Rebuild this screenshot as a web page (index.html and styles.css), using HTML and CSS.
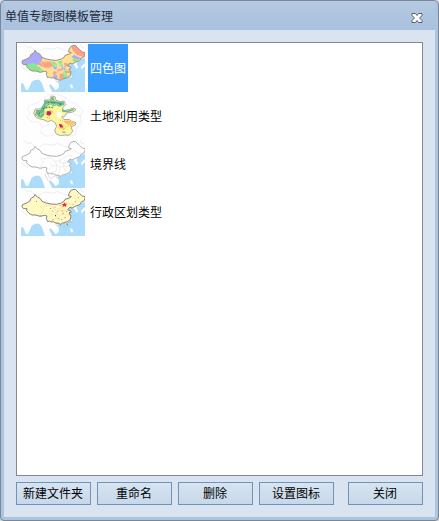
FILE: index.html
```
<!DOCTYPE html>
<html lang="zh-CN">
<head>
<meta charset="utf-8">
<title>单值专题图模板管理</title>
<link rel="stylesheet" href="styles.css">
</head>
<body>
<svg class="defs" aria-hidden="true">
  <defs>
    <path id="china" d="M24 68 25 62 38 57 48 51 50 44 60 38 63 31 70 39 78 43 84 52 96 57 112 60 128 61 142 57 150 52 153 46 166 42 172 38 164 36 165 28 172 18 184 16 196 28 205 36 214 38 211 50 203 53 197 62 186 66 174 72 168 69 161 77 168 80 172 83 165 87 171 96 169 106 160 113 146 117 140 121 132 117 126 118 118 113 111 114 106 111 101 113 97 103 99 96 92 94 78 97 66 93 54 93 45 88 38 80 39 74 28 74Z"/>
    <clipPath id="chinaClip"><use href="#china"/></clipPath>
    <g id="base">
      <rect x="21" y="12" width="192" height="144" fill="#fefefe"/>
      <path fill="none" stroke="#e4e4e4" stroke-width="2" d="M30 13 38 22 52 20 60 30M72 40 82 30 94 24 118 28 130 22 150 30 164 34M198 12 202 22 213 24M22 78 32 90 42 94"/>
      <path fill="#abdcfb" d="M213 54 202 56 190 67 187 72 193 82 187 86 181 74 174 71 167 70 162 77 171 82 167 88 172 98 168 108 157 115 144 118 133 119 126 122 135 132 134 144 125 151 118 142 109 133 105 137 111 148 114 156 213 156ZM21 129 29 132 35 149 43 149 53 125 64 119 75 119 82 126 87 139 93 156 21 156Z"/>
      <path fill="#fff" stroke="#ddd" d="M203 78 213 69 213 78 205 86 200 85ZM171 107 174 104 173 113 170 114ZM168 134 174 133 178 145 171 145Z"/>
      <path fill="#fff" stroke="#ccc" stroke-width="1.5" d="M125 121 132 119 133 123 128 125Z"/>
      <path fill="none" stroke="#79c4ef" stroke-width="2" stroke-dasharray="3 7" d="M181 94 170 122 158 132 151 150 138 154"/>
    </g>
    <path id="provinces" fill="none" stroke-width="1.5" d="M78 65 88 77 78 97M88 68 109 63 119 75 137 75 151 65 162 57 176 61M106 80 115 91 129 88 138 94 151 90 163 92M123 75 129 88 127 104 111 110M138 94 136 110M151 73 148 90 156 111M138 70 137 80 149 82 167 78M114 91 104 101M180 43 193 51 202 53"/>
  </defs>
</svg>
<main class="window">
  <header class="titlebar">
    <h1>单值专题图模板管理</h1>
    <svg class="close" viewBox="0 0 12 10" role="img" aria-label="关闭">
      <path d="M1 .5H4.5L6 2.5 7.5.5H11V2.5L8.5 5 11 7.5V9.5H7.5L6 7.5 4.5 9.5H1V7.5L3.5 5 1 2.5Z"/>
    </svg>
  </header>
  <section class="content">
    <ul class="list">
      <li class="item selected">
        <svg class="thumb" viewBox="21 12 192 144">
          <use href="#base"/>
          <g clip-path="url(#chinaClip)">
            <rect x="21" y="12" width="192" height="144" fill="#ffe28f"/>
            <path fill="#aaa9fb" d="M20 30H76L86 55 78 74H20ZM115 74H126L131 86 121 90ZM181 44 204 55 190 60 172 51ZM143 79H154V91H143ZM118 103 131 107 128 119H115Z"/>
            <path fill="#8ae691" d="M35 72 60 70 80 84 91 94 78 101 48 97ZM108 64 122 66 132 76 122 81 106 75ZM133 65 143 61 146 78 137 82ZM151 87 162 90 158 101 147 98ZM145 103 157 100 162 114 145 118ZM180 53 192 58 186 67 174 62Z"/>
            <path fill="#ff9f87" d="M76 66 108 63 116 78 105 84 86 82 74 74ZM172 18 188 14 216 38 211 52 188 44 176 31ZM150 68 166 72 169 80 151 80ZM128 88 143 86 144 93 129 95ZM119 93 131 97 128 106 116 103ZM134 103 148 99 147 115 138 119ZM157 91 172 92 170 99 158 99Z"/>
            <use href="#provinces" stroke="#f5e6ba"/>
          </g>
          <use href="#china" fill="none" stroke="#9b918e" stroke-width="3"/>
        </svg>
        <span class="label">四色图</span>
      </li>
      <li class="item">
        <svg class="thumb" viewBox="21 6 192 144">
          <rect x="21" y="6" width="192" height="144" fill="#fefefe"/>
          <path fill="none" stroke="#e9e9e9" stroke-width="2" d="M40 53 52 44 71 39 88 24 104 15 129 13 154 21 166 34 188 42 207 62 198 78 202 99 187 114 185 133 168 139M40 53 47 70 39 84 57 96 72 94 86 111 79 128 99 139 123 135M154 21 150 40 170 50 180 73 202 78M86 111 105 103"/>
          <path fill="#fff69a" stroke="#aaa" stroke-width="3" d="M59 71 64 57 79 57 93 41 91 30 107 30 112 18 123 20 126 31 139 35 150 33 155 44 147 52 145 62 156 61 169 57 180 54 186 59 176 66 158 69 152 79 144 81 150 89 166 88 173 94 186 98 184 105 171 110 176 124 166 136 151 135 139 137 126 131 122 120 128 109 124 99 113 91 101 95 91 90 79 87 67 83Z"/>
          <path fill="#6dbb8d" d="M94 31 108 32 112 22 119 22 122 33 140 36 149 35 151 44 136 50 128 45 117 50 110 43 101 47 91 58 91 75 82 84 72 80 63 76 67 60 79 60ZM145 57 158 62 178 57 181 61 160 67 145 66Z"/>
          <path fill="none" stroke="#c8e69c" stroke-width="3" d="M72 67 81 74 88 67M94 47 106 38 118 46 131 39M66 74 73 78M112 28 117 34"/>
          <path fill="none" stroke="#35845b" stroke-width="4" stroke-dasharray="5 4" d="M75 67 76 77M101 38 122 38 145 43M87 57 102 51 116 53"/>
          <path fill="#fff" d="M129 66H141L144 76 137 84 127 80Z"/>
          <path fill="#ffc36c" d="M98 65 111 60 118 66 108 68 102 76 94 75ZM150 93 162 91 182 97 184 103 166 106 156 101ZM136 98 143 106 156 116 148 118 140 110Z"/>
          <path fill="none" stroke="#f36c3c" stroke-width="2" stroke-dasharray="3 4" d="M94 67 112 63 120 70M99 82 112 87M138 90 148 94 167 96M145 101 154 111 171 106M134 114 151 119"/>
          <path fill="#c5275d" d="M99 64H108L113 70 107 77 98 74ZM134 103H143L148 111 139 113Z"/>
          <path fill="#63c9e9" d="M124 41H135V46H124ZM145 124 155 125 154 130 145 128Z"/>
        </svg>
        <span class="label">土地利用类型</span>
      </li>
      <li class="item">
        <svg class="thumb" viewBox="21 12 192 144">
          <use href="#base"/>
          <use href="#china" fill="#fefefe"/>
          <use href="#provinces" stroke="#ddd"/>
          <use href="#china" fill="none" stroke="#b0b0b0" stroke-width="3"/>
          <path fill="none" stroke="#ccc" stroke-width="2" d="M100 112 109 128 117 123 123 119M93 112 96 123 104 136"/>
        </svg>
        <span class="label">境界线</span>
      </li>
      <li class="item">
        <svg class="thumb" viewBox="21 12 192 144">
          <use href="#base"/>
          <use href="#china" fill="#fffac4"/>
          <use href="#provinces" stroke="#e5dda9"/>
          <use href="#china" fill="none" stroke="#85837a" stroke-width="3"/>
          <path fill="#f27770" d="M66 51h3v3h-3zM77 94h3v3h-3zM108 72h3v3h-3zM121 68h3v3h-3zM115 80h3v3h-3zM130 80h3v3h-3zM143 79h3v3h-3zM145 87h3v3h-3zM157 81h3v3h-3zM165 91h3v3h-3zM152 99h3v3h-3zM142 105h3v3h-3zM131 102h3v3h-3zM115 106h3v3h-3zM126 116h3v3h-3zM150 115h3v3h-3zM176 61h3v3h-3zM183 52h3v3h-3zM191 40h3v3h-3zM137 63h3v3h-3zM169 111h3v3h-3z"/>
          <path fill="#ef2929" d="M150 55 154 59H160L156 63 157 69 151 66 145 69 147 63 142 60H149Z"/>
          <path fill="none" stroke="#d59a44" stroke-width="3" stroke-dasharray="2 9" d="M174 72 168 108 164 124 150 128 134 124"/>
          <path fill="#594f44" d="M123 93h3v4h-3zM166 85h3v3h-3zM158 119h3v3h-3z"/>
        </svg>
        <span class="label">行政区划类型</span>
      </li>
    </ul>
    <footer class="actions">
      <button>新建文件夹</button>
      <button>重命名</button>
      <button>删除</button>
      <button>设置图标</button>
      <button class="dismiss">关闭</button>
    </footer>
  </section>
</main>
</body>
</html>
```

FILE: styles.css
```
* { box-sizing: border-box; }

body {
  margin: 0;
  background: #dcd5df;
  font: 12px/16px "Noto Sans CJK SC", sans-serif;
  color: #000;
}

.defs { position: absolute; width: 0; height: 0; }

.window {
  height: 521px;
  display: flex;
  flex-direction: column;
  padding: 0 3px 3px;
  border: 1px solid #7b8794;
  border-radius: 5px 5px 4px 4px;
  background: #abc4e0;
  overflow: hidden;
}

.titlebar {
  height: 29px;
  flex: none;
  display: flex;
  align-items: center;
  justify-content: space-between;
  padding: 0 12px 0 1px;
  background: linear-gradient(#b5c9e1, #a9c1de);
}

h1 {
  margin: 0;
  font-size: 12px;
  font-weight: 400;
  color: #1e2c40;
}

.close {
  width: 12px;
  height: 10px;
  margin-top: 4px;
  fill: #fff;
  stroke: #536071;
}

.content {
  flex: 1;
  display: flex;
  flex-direction: column;
  padding: 12px 12px 12px;
  background: #dae4f0;
}

.list {
  height: 434px;
  flex: none;
  margin: 0;
  padding: 1px 4px;
  list-style: none;
  background: #fff;
  border: 1px solid #828790;
}

.item {
  height: 48px;
  display: flex;
  align-items: stretch;
  gap: 3px;
}

.thumb { width: 64px; height: 48px; flex: none; }

.label {
  display: flex;
  align-items: center;
  padding: 0 2px;
}

.selected .label { background: #3399ff; color: #fff; }

.actions { display: flex; gap: 6px; margin-top: 6px; }

button {
  width: 75px;
  height: 23px;
  padding: 0 1px 2px 0;
  border: 1px solid #6e93bd;
  background: linear-gradient(#d7e4f1, #c7d8e9);
  font: inherit;
  color: inherit;
}

.dismiss { margin-left: auto; }
```
